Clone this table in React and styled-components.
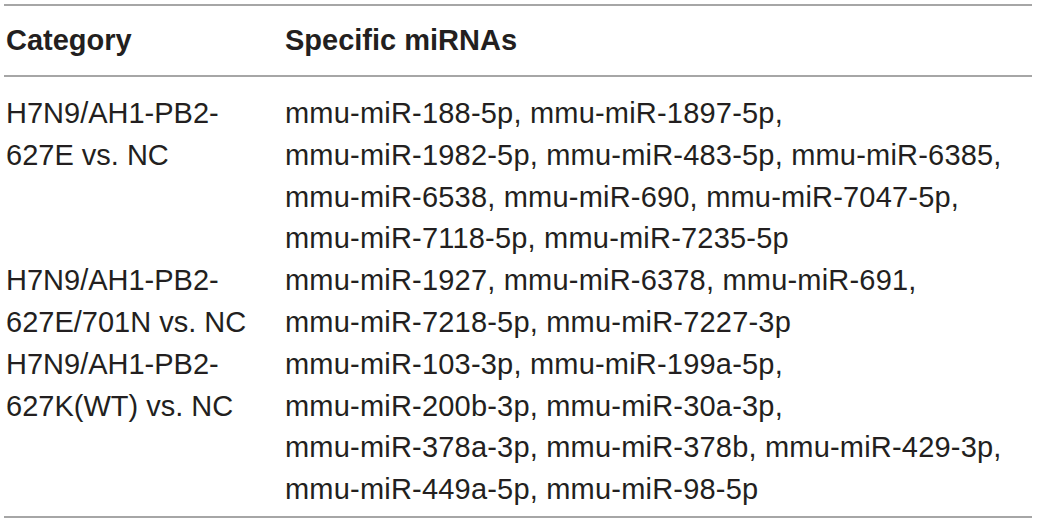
import React from "react";
import styled, { createGlobalStyle } from "styled-components";

const GlobalStyle = createGlobalStyle`
  html, body {
    margin: 0;
    padding: 0;
    background: #ffffff;
  }
  body {
    font-family: "Liberation Sans", Arial, sans-serif;
    color: #231f20;
  }
`;

const Page = styled.div`
  width: 1039px;
  height: 525px;
  padding: 4px 0 0 4px;
  box-sizing: border-box;
`;

const Table = styled.div`
  width: 1028px;
  border-top: 2px solid #a6a6a6;
  border-bottom: 2px solid #a6a6a6;
`;

const HeadRow = styled.div`
  display: grid;
  grid-template-columns: 279px 1fr;
  align-items: center;
  height: 69px;
  border-bottom: 2px solid #a6a6a6;
  padding-left: 2px;
  font-weight: 700;
  font-size: 29px;
`;

const Body = styled.div`
  padding: 16px 0 5px 2px;
`;

const Row = styled.div`
  display: grid;
  grid-template-columns: 279px 1fr;
  font-size: 29px;
  line-height: 41.8px;
`;

const Cell = styled.div`
  white-space: pre-line;
  letter-spacing: ${(p) => (p.wide ? "0.2px" : "0")};
`;

const rows = [
  {
    cat: "H7N9/AH1-PB2-\n627E vs. NC",
    mirs: "mmu-miR-188-5p, mmu-miR-1897-5p,\nmmu-miR-1982-5p, mmu-miR-483-5p, mmu-miR-6385,\nmmu-miR-6538, mmu-miR-690, mmu-miR-7047-5p,\nmmu-miR-7118-5p, mmu-miR-7235-5p",
  },
  {
    cat: "H7N9/AH1-PB2-\n627E/701N vs. NC",
    mirs: "mmu-miR-1927, mmu-miR-6378, mmu-miR-691,\nmmu-miR-7218-5p, mmu-miR-7227-3p",
  },
  {
    cat: "H7N9/AH1-PB2-\n627K(WT) vs. NC",
    mirs: "mmu-miR-103-3p, mmu-miR-199a-5p,\nmmu-miR-200b-3p, mmu-miR-30a-3p,\nmmu-miR-378a-3p, mmu-miR-378b, mmu-miR-429-3p,\nmmu-miR-449a-5p, mmu-miR-98-5p",
  },
];

export default function App() {
  return (
    <>
      <GlobalStyle />
      <Page>
        <Table>
          <HeadRow>
            <Cell>Category</Cell>
            <Cell>Specific miRNAs</Cell>
          </HeadRow>
          <Body>
            {rows.map((r) => (
              <Row key={r.cat}>
                <Cell>{r.cat}</Cell>
                <Cell wide>{r.mirs}</Cell>
              </Row>
            ))}
          </Body>
        </Table>
      </Page>
    </>
  );
}
